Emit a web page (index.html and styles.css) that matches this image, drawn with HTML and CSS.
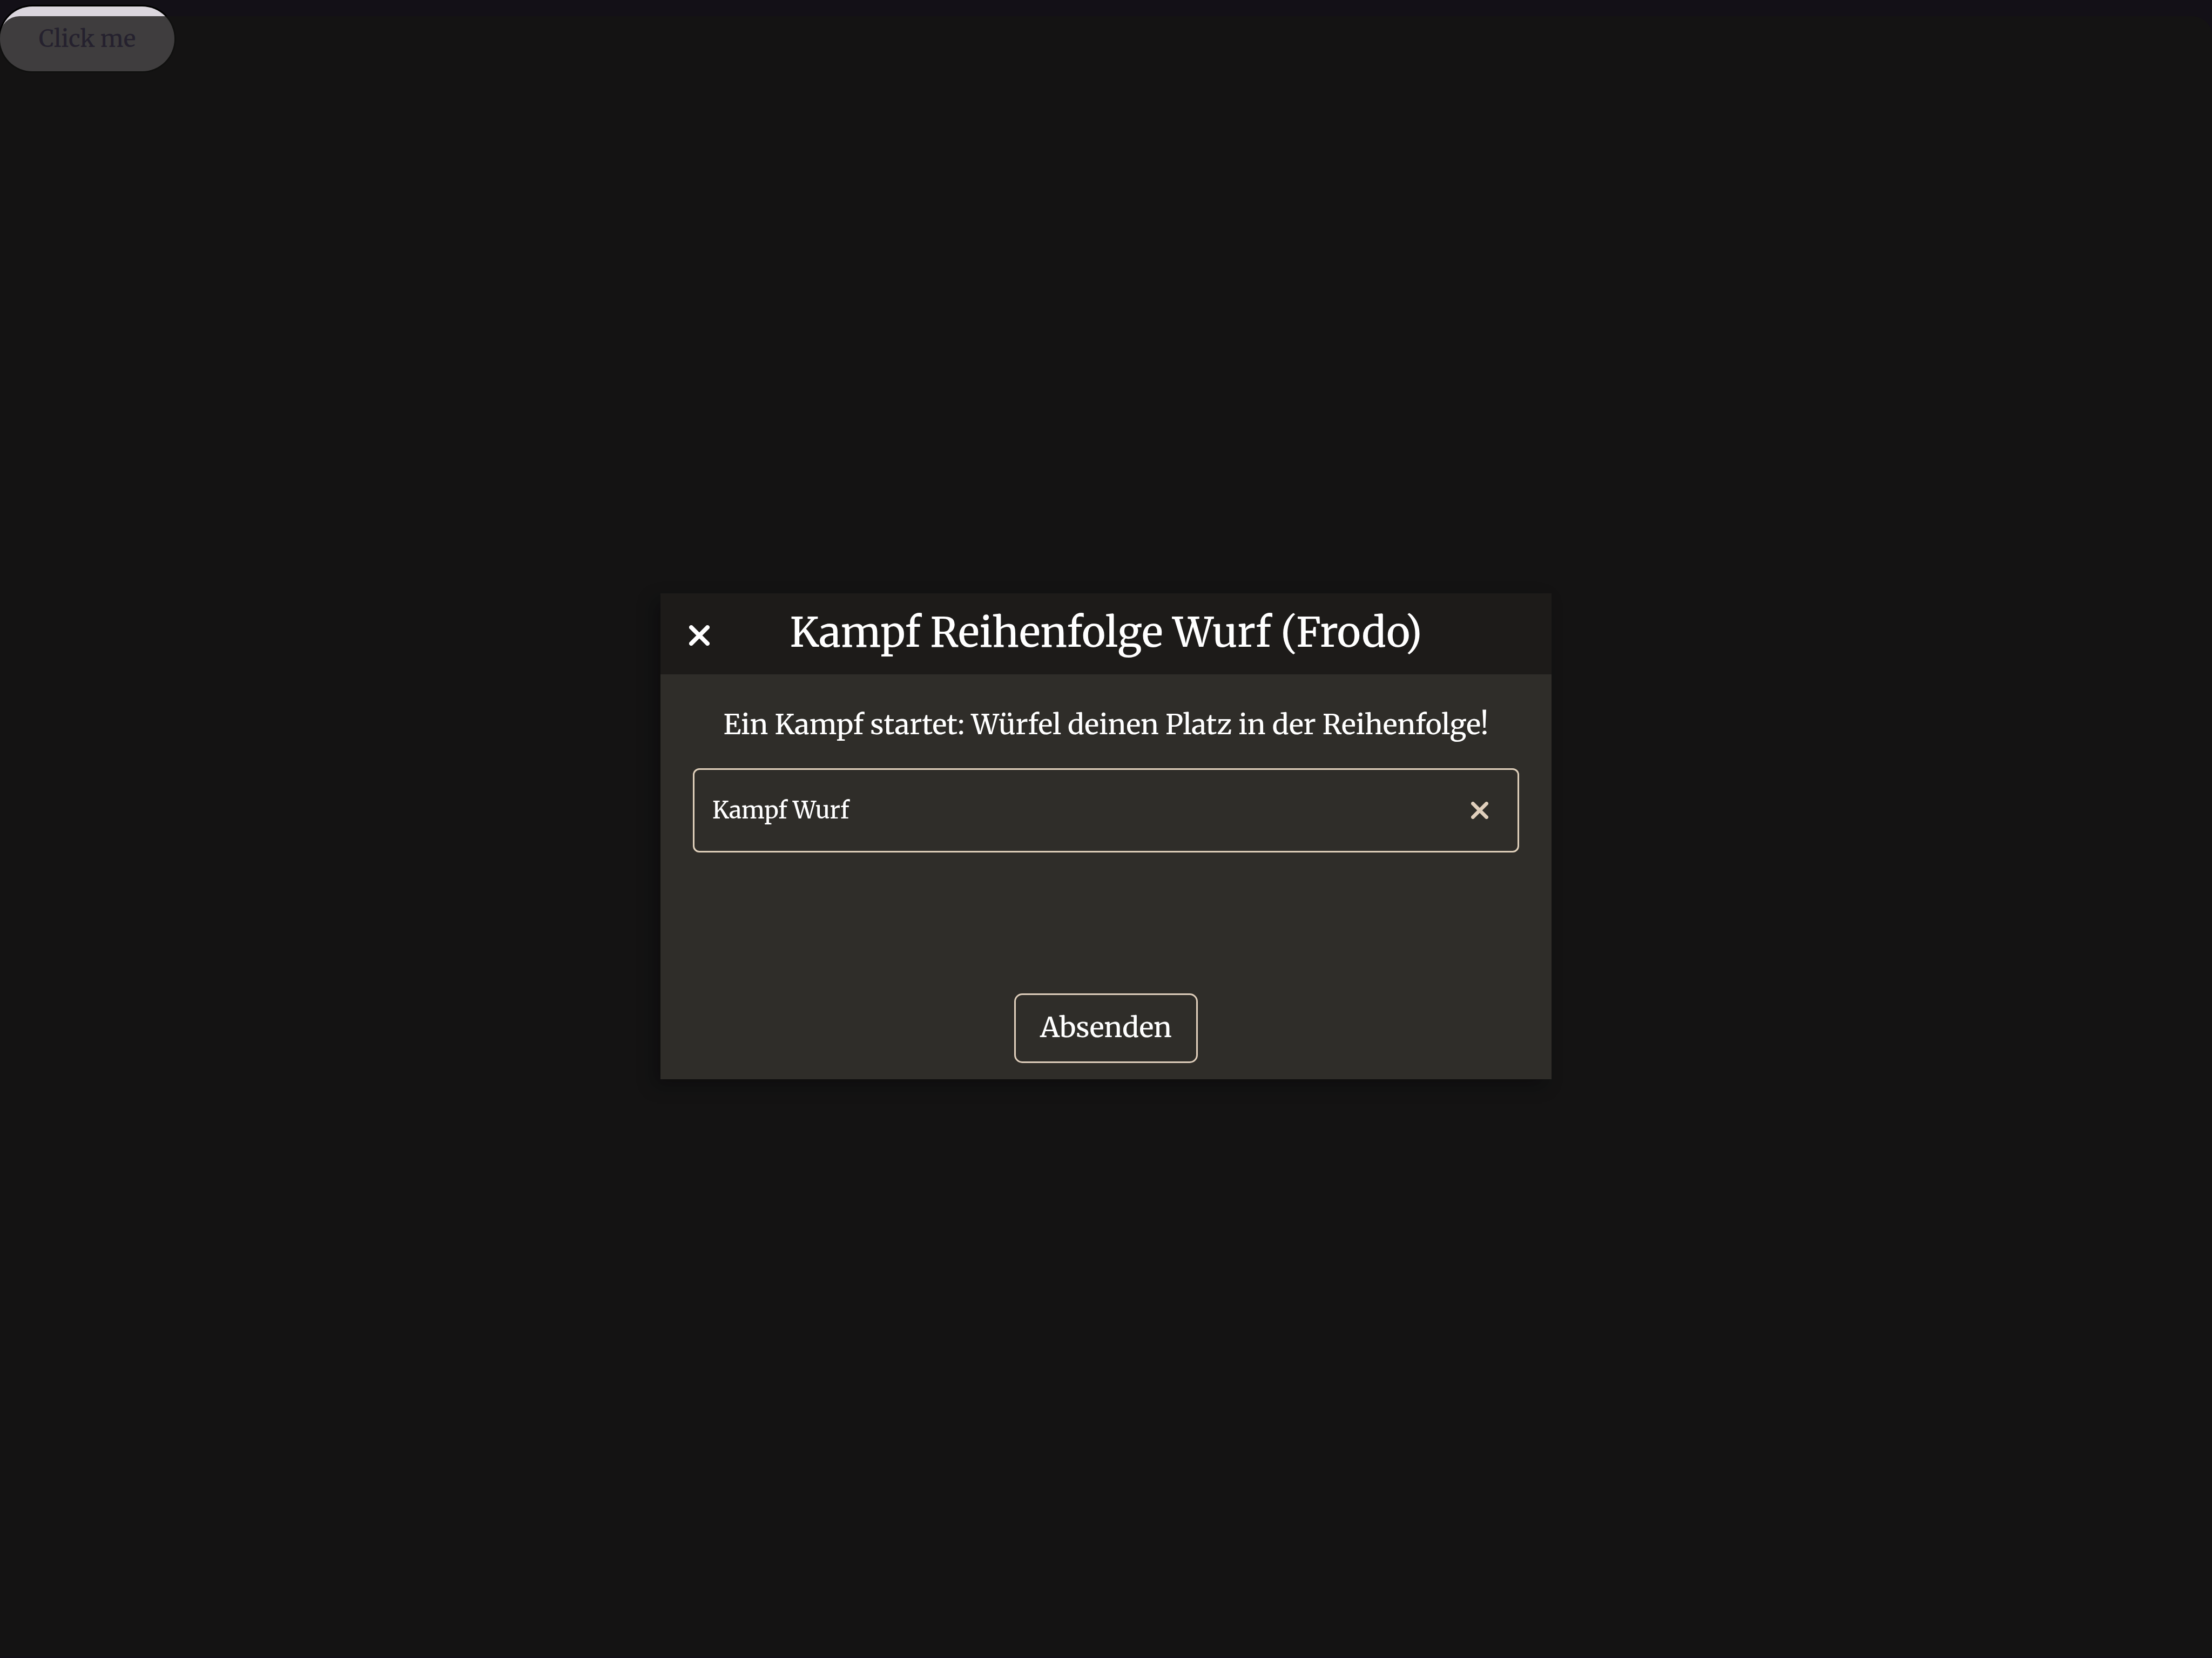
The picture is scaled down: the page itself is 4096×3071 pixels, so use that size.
FILE: index.html
```
<!DOCTYPE html>
<html lang="de">
<head>
<meta charset="utf-8">
<title>Kampf Reihenfolge Wurf</title>
<link rel="stylesheet" href="styles.css">
</head>
<body>
<button class="trigger" type="button">Click me</button>
<div class="backdrop">
  <form class="dialog" role="dialog" aria-labelledby="dialog-title">
    <header class="dialog-header">
      <button class="icon-button" type="button" aria-label="Schließen">
        <svg class="icon icon-close" viewBox="0 0 38 38"><path d="M4 4 34 34M34 4 4 34"/></svg>
      </button>
      <h1 class="dialog-title" id="dialog-title">Kampf Reihenfolge Wurf (Frodo)</h1>
    </header>
    <div class="dialog-body">
      <p class="message">Ein Kampf startet: Würfel deinen Platz in der Reihenfolge!</p>
      <div class="field">
        <input class="field-input" type="text" placeholder="Kampf Wurf" aria-label="Kampf Wurf">
        <button class="icon-button" type="button" aria-label="Leeren">
          <svg class="icon icon-clear" viewBox="0 0 38 38"><path d="M4 4 34 34M34 4 4 34"/></svg>
        </button>
      </div>
      <button class="submit" type="submit">Absenden</button>
    </div>
  </form>
</div>
</body>
</html>
```
FILE: styles.css
```
* {
  box-sizing: border-box;
}

body {
  margin: 0;
  min-height: 100vh;
  padding-top: 12px;
  background: #131017;
  font-family: Merriweather, "DejaVu Serif Condensed", "DejaVu Serif", serif;
  font-weight: 550;
  color: #fff;
}

button,
input {
  margin: 0;
  padding: 0;
  border: 0;
  background: none;
  color: inherit;
  font: inherit;
}

.trigger {
  display: block;
  width: 323px;
  height: 120px;
  border-radius: 60px;
  background: #dbd6de;
  box-shadow: 0 0 0 3px #000;
  color: #635292;
  font-size: 43px;
}

.backdrop {
  position: fixed;
  inset: 30px 0 3px;
  display: flex;
  align-items: center;
  justify-content: center;
  border-radius: 36px 36px 0 0;
  background: rgba(20, 20, 19, 0.79);
}

.dialog {
  width: 1650px;
  background: #2f2d29;
  box-shadow: -12px 12px 30px rgba(0, 0, 0, 0.3);
}

.dialog-header {
  display: grid;
  grid-template-columns: 144px 1fr 144px;
  align-items: center;
  height: 150px;
  background: #1d1b19;
}

.dialog-header .icon-button {
  padding-top: 6px;
}

.dialog-title {
  margin: 0;
  padding-bottom: 6px;
  font-size: 75px;
  font-weight: 500;
  line-height: 90px;
  text-align: center;
  white-space: nowrap;
}

.icon-button {
  display: flex;
  align-items: center;
  justify-content: center;
}

.icon {
  fill: none;
  stroke: currentColor;
  stroke-width: 8;
  stroke-linecap: round;
}

.icon-close {
  width: 38px;
  height: 38px;
}

.icon-clear {
  width: 32px;
  height: 32px;
}

.dialog-body {
  display: flex;
  flex-direction: column;
  align-items: center;
  height: 750px;
  padding: 60px 60px 30px;
}

.message {
  margin: 0 0 48px;
  font-size: 51px;
  line-height: 66px;
  white-space: nowrap;
}

.field {
  display: flex;
  align-items: center;
  width: 100%;
  height: 156px;
  padding: 0 54px 0 33px;
  border: 3px solid #e0d0bb;
  border-radius: 12px;
}

.field-input {
  flex: 1;
  font-size: 43px;
}

.field-input::placeholder {
  color: #fff;
  opacity: 1;
}

.field .icon-button {
  color: #e0cfbc;
}

.submit {
  width: 340px;
  height: 129px;
  margin-top: auto;
  padding-bottom: 3px;
  border: 3px solid #e0cfbc;
  border-radius: 15px;
  font-size: 51px;
}
```
